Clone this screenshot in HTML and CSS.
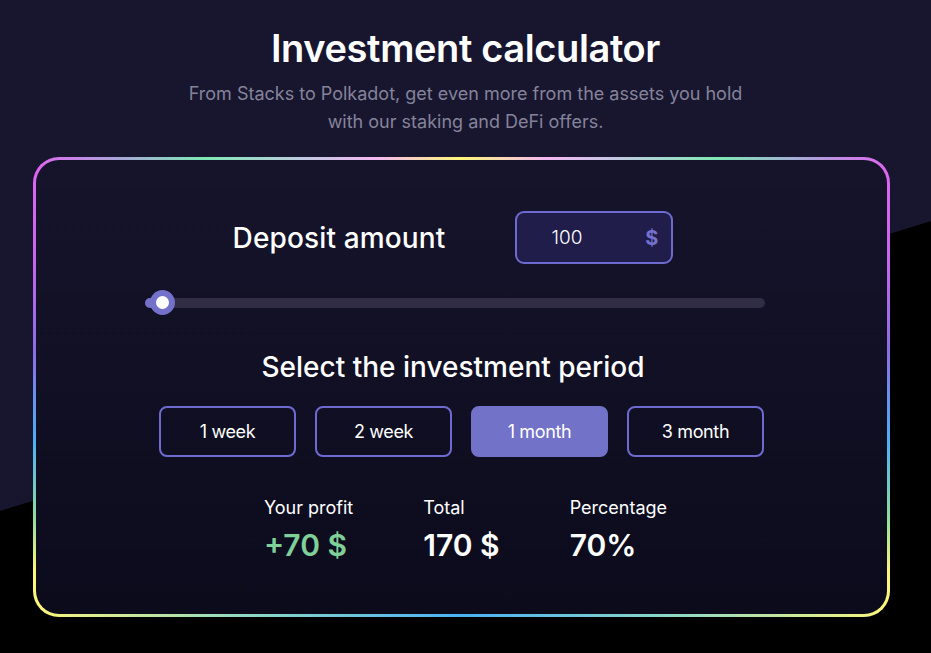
FILE: index.html
```html
<!DOCTYPE html>
<html lang="en">
<head>
<meta charset="UTF-8">
<meta name="viewport" content="width=device-width, initial-scale=1.0">
<title>Investment calculator</title>
<link rel="stylesheet" href="styles.css">
</head>
<body>
<div class="backdrop"></div>

<section class="calc">
    <h1 class="calc-title">Investment calculator</h1>
    <p class="calc-subtitle">From Stacks to Polkadot, get even more from the assets you hold<br>with our staking and DeFi offers.</p>

    <div class="calc-card">
        <div class="calc-card-inner">
            <div class="deposit">
                <h2 class="deposit-label">Deposit amount</h2>
                <div class="deposit-input">
                    <span class="deposit-value">100</span>
                    <span class="deposit-currency">$</span>
                </div>
            </div>

            <div class="slider">
                <div class="slider-fill"></div>
                <div class="slider-thumb"></div>
            </div>

            <h2 class="period-title">Select the investment period</h2>
            <div class="period">
                <button class="period-btn">1 week</button>
                <button class="period-btn">2 week</button>
                <button class="period-btn active">1 month</button>
                <button class="period-btn">3 month</button>
            </div>

            <div class="stats">
                <div class="stat">
                    <span class="stat-label">Your profit</span>
                    <span class="stat-value profit">+70 $</span>
                </div>
                <div class="stat">
                    <span class="stat-label">Total</span>
                    <span class="stat-value">170 $</span>
                </div>
                <div class="stat">
                    <span class="stat-label">Percentage</span>
                    <span class="stat-value">70%</span>
                </div>
            </div>
        </div>
    </div>
</section>
</body>
</html>
```

FILE: styles.css
```css
body {
    margin: 0;
    height: 100vh;
    overflow: hidden;
    position: relative;
    background-color: #18162f;
    font-family: Inter, "Noto Sans", sans-serif;
    color: #ffffff;
}

/* black diagonal shape behind the card */
.backdrop {
    position: absolute;
    inset: 0;
    background-color: #000000;
    clip-path: polygon(0 511px, 100% 221px, 100% 100%, 0 100%);
}

.calc {
    position: relative;
    padding-top: 26px;
}

.calc-title {
    margin: 0;
    text-align: center;
    font-size: 38px;
    line-height: 44px;
    font-weight: 600;
    letter-spacing: -0.01em;
}

.calc-subtitle {
    margin: 10px 0 0;
    text-align: center;
    font-size: 18px;
    line-height: 28px;
    color: #85839a;
}

/* gradient border: sides vertical, top and bottom horizontal strips */
.calc-card {
    width: 857px;
    margin: 21px 0 0 33px;
    padding: 3px;
    box-sizing: border-box;
    border-radius: 26px;
    background:
        linear-gradient(90deg, #e266f2 0%, #a9a6d8 10%, #7ee8b4 20%, #c9c6e6 33%, #f3b8f2 40%, #fdf67a 50%, #f3b8f2 60%, #c9c6e6 67%, #7ee8b4 80%, #a9a6d8 90%, #e266f2 100%) top / 100% 8px no-repeat,
        linear-gradient(90deg, #fdf67a 0%, #8fd8c4 25%, #4ab2f4 50%, #8fd8c4 75%, #fdf67a 100%) bottom / 100% 8px no-repeat,
        linear-gradient(180deg, #e266f2 0%, #c766ee 22%, #8c6de6 42%, #4ab2f4 62%, #8fdba0 78%, #fdf67a 90%, #fdf67a 100%);
}

.calc-card-inner {
    border-radius: 23px;
    background: linear-gradient(180deg, #16142b 0%, #0c0b1c 100%);
    padding: 51px 0 52px;
}

.deposit {
    display: flex;
    justify-content: center;
    align-items: center;
    gap: 70px;
    padding-right: 17px;
}

.deposit-label {
    margin: 0;
    font-size: 28px;
    font-weight: 500;
    letter-spacing: 0.005em;
}

.deposit-input {
    display: flex;
    justify-content: space-between;
    align-items: center;
    width: 158px;
    height: 53px;
    box-sizing: border-box;
    padding: 0 13px 0 34px;
    border: 2px solid #6e6bd0;
    border-radius: 9px;
    background-color: #211d4b;
}

.deposit-value {
    font-size: 19px;
    font-weight: 300;
}

.deposit-currency {
    font-size: 20px;
    font-weight: 700;
    color: #7470cc;
}

.slider {
    position: relative;
    width: 620px;
    height: 10px;
    margin: 34px 0 0 109px;
    border-radius: 5px;
    background-color: #302d45;
}

.slider-fill {
    width: 18px;
    height: 10px;
    border-radius: 5px;
    background-color: #7371c9;
}

.slider-thumb {
    position: absolute;
    left: 5px;
    top: -8px;
    width: 13px;
    height: 13px;
    border: 6px solid #7371c9;
    border-radius: 50%;
    background-color: #ffffff;
}

.period-title {
    margin: 43px 0 0;
    padding-right: 17px;
    text-align: center;
    font-size: 28px;
    line-height: 32px;
    font-weight: 500;
}

.period {
    display: flex;
    justify-content: center;
    gap: 19px;
    margin-top: 23px;
}

.period-btn {
    width: 137px;
    height: 51px;
    border: 2px solid #6e6bd0;
    border-radius: 8px;
    background: transparent;
    color: #ffffff;
    font-family: inherit;
    font-size: 18px;
    font-weight: 400;
    letter-spacing: -0.02em;
    cursor: pointer;
}

.period-btn.active {
    background-color: #7272c8;
    border-color: #7272c8;
}

.stats {
    display: flex;
    justify-content: center;
    gap: 70px;
    margin-top: 40px;
    padding-left: 8px;
}

.stat {
    display: flex;
    flex-direction: column;
    gap: 9px;
}

.stat-label {
    font-size: 18px;
    line-height: 22px;
    font-weight: 400;
}

.stat-value {
    font-size: 30px;
    line-height: 34px;
    font-weight: 600;
}

.stat-value.profit {
    color: #7fcf99;
}
```
